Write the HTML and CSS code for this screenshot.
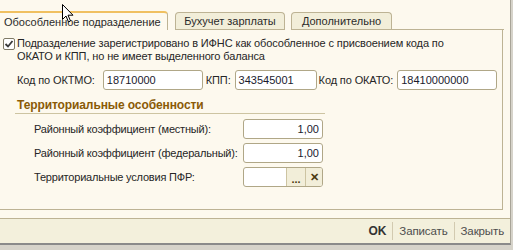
FILE: index.html
```html
<!DOCTYPE html>
<html lang="ru">
<head>
<meta charset="utf-8">
<title>Обособленное подразделение</title>
<link rel="stylesheet" href="styles.css">
</head>
<body>
<div class="window">
  <div class="tabs">
    <div class="tab active">Обособленное подразделение</div>
    <div class="tab t2">Бухучет зарплаты</div>
    <div class="tab t3">Дополнительно</div>
    <div class="tabs-fill"></div>
  </div>
  <div class="panel">
    <div class="check-row">
      <span class="checkbox"><svg width="10" height="10" viewBox="0 0 10 10"><path d="M1.5 5 L4 7.5 L8.5 2" fill="none" stroke="#3a3a3a" stroke-width="1.8"/></svg></span>
      <span class="check-label">Подразделение зарегистрировано в ИФНС как обособленное с присвоением кода по ОКАТО и КПП, но не имеет выделенного баланса</span>
    </div>
    <div class="codes">
      <span class="lbl">Код по ОКТМО:</span>
      <div class="input w-oktmo">18710000</div>
      <span class="lbl">КПП:</span>
      <div class="input w-kpp">343545001</div>
      <span class="lbl">Код по ОКАТО:</span>
      <div class="input w-okato">18410000000</div>
    </div>
    <div class="section">Территориальные особенности</div>
    <div class="rows">
      <span class="rlbl">Районный коэффициент (местный):</span>
      <div class="input num">1,00</div>
      <span class="rlbl">Районный коэффициент (федеральный):</span>
      <div class="input num">1,00</div>
      <span class="rlbl">Территориальные условия ПФР:</span>
      <div class="input sel"><span class="sel-text"></span><span class="btn dots">...</span><span class="btn clr">✕</span></div>
    </div>
  </div>
  <div class="gap"></div>
  <div class="footer">
    <span class="fbtn ok">OK</span>
    <span class="sep"></span>
    <span class="fbtn">Записать</span>
    <span class="sep"></span>
    <span class="fbtn">Закрыть</span>
  </div>
</div>
<svg class="cursor" width="13" height="20" viewBox="0 0 13 20"><path d="M0.5 0.5 L0.5 15.5 L4 12 L6.5 18 L8.5 17 L6 11.2 L11 11.2 Z" fill="#fff" stroke="#000" stroke-width="1"/></svg>
</body>
</html>
```
FILE: styles.css
```css
html, body {
  margin: 0;
  padding: 0;
}
body {
  width: 513px;
  height: 250px;
  overflow: hidden;
  background: #d6d3ca;
  font-family: "Liberation Sans", Arial, sans-serif;
  font-size: 11px;
  letter-spacing: -0.12px;
  color: #262626;
  position: relative;
}
.window {
  width: 510px;
  height: 243px;
  background: #fdf9ee;
  border-right: 1px solid #a8a498;
  border-bottom: 2px solid #8a8a8a;
  display: flex;
  flex-direction: column;
}
.tabs {
  display: flex;
  align-items: flex-end;
  height: 30px;
  flex: none;
}
.tab {
  line-height: 17px;
  padding: 0 10px;
  background: #f2eed9;
  border: 1px solid #bdb394;
  border-bottom: none;
  border-radius: 4px 4px 0 0;
  margin-right: 6px;
  color: #2a2a2a;
  box-sizing: border-box;
  height: 18px;
  white-space: nowrap;
  letter-spacing: 0;
}
.tab.active {
  width: 168px;
  height: 19px;
  line-height: 19px;
  padding: 0 0 0 4px;
  background: #fdf9ee;
  border-top: 2px solid #f0c060;
  border-left: none;
  border-radius: 0 4px 0 0;
  margin-right: 7px;
}
.tab.t2 {
  width: 110px;
  box-shadow: inset 0 -1px 0 #bdb394;
  text-align: center;
  padding: 0;
}
.tab.t3 {
  width: 101px;
  box-shadow: inset 0 -1px 0 #bdb394;
  text-align: center;
  padding: 0;
}
.tabs-fill {
  flex: 1;
  height: 30px;
  border-bottom: 1px solid #bdb394;
  box-sizing: border-box;
  margin-left: -6px;
  margin-right: 6px;
}
.panel {
  width: 503px;
  height: 180px;
  box-sizing: border-box;
  border-right: 1px solid #bdb394;
  border-bottom: 1px solid #bdb394;
  padding: 7px 0 0 3px;
  flex: none;
}
.check-row {
  display: flex;
  align-items: flex-start;
}
.checkbox {
  width: 10px;
  height: 10px;
  border: 1px solid #7f7a66;
  border-radius: 2px;
  background: #fff;
  margin-top: 1px;
  margin-right: 2px;
  display: flex;
  flex: none;
}
.check-label {
  line-height: 13px;
  width: 460px;
}
.codes {
  display: flex;
  align-items: center;
  margin-top: 7px;
  padding-left: 14px;
  height: 20px;
  white-space: nowrap;
}
.lbl {
  margin-right: 4px;
}
.input {
  height: 20px;
  box-sizing: border-box;
  border: 1px solid #b0a787;
  border-radius: 3px;
  background: #fff;
  line-height: 18px;
  padding: 0 3px;
  color: #1a1a2e;
  letter-spacing: 0;
}
.w-oktmo { width: 100px; margin-right: 3px; margin-left: 4px; }
.w-kpp { width: 82px; margin-right: 2px; }
.w-okato { width: 100px; }
.section {
  margin: 8px 0 0 12px;
  width: 308px;
  font-weight: bold;
  font-size: 12px;
  letter-spacing: -0.1px;
  color: #8a5a06;
  border-bottom: 1px solid #cdc4a2;
  line-height: 15px;
  padding-left: 2px;
  white-space: nowrap;
}
.rows {
  display: grid;
  grid-template-columns: 209px 80px;
  row-gap: 4px;
  margin: 5px 0 0 31px;
  align-items: center;
}
.rlbl {
  white-space: nowrap;
  letter-spacing: -0.2px;
}
.num {
  text-align: right;
}
.sel {
  display: flex;
  padding: 0;
  overflow: hidden;
}
.sel-text { flex: 1; }
.btn {
  width: 18px;
  flex: none;
  background: #f2eed9;
  border-left: 1px solid #cdc4a2;
  text-align: center;
  font-weight: bold;
  color: #4a3a10;
}
.btn.dots { line-height: 22px; }
.btn.clr { width: 16px; font-size: 11px; }
.gap {
  height: 8px;
  flex: none;
}
.footer {
  flex: 1;
  border-top: 1px solid #bdb394;
  background: #f3f0dc;
  display: flex;
  align-items: center;
  justify-content: flex-end;
}
.fbtn {
  color: #4d4d4d;
  font-size: 11.5px;
  padding: 0 6px;
}
.fbtn.ok {
  font-weight: bold;
  font-size: 12px;
  color: #333;
}
.sep {
  width: 1px;
  height: 18px;
  background: #d2cab0;
}
.cursor {
  position: absolute;
  left: 62px;
  top: 4px;
}
```
